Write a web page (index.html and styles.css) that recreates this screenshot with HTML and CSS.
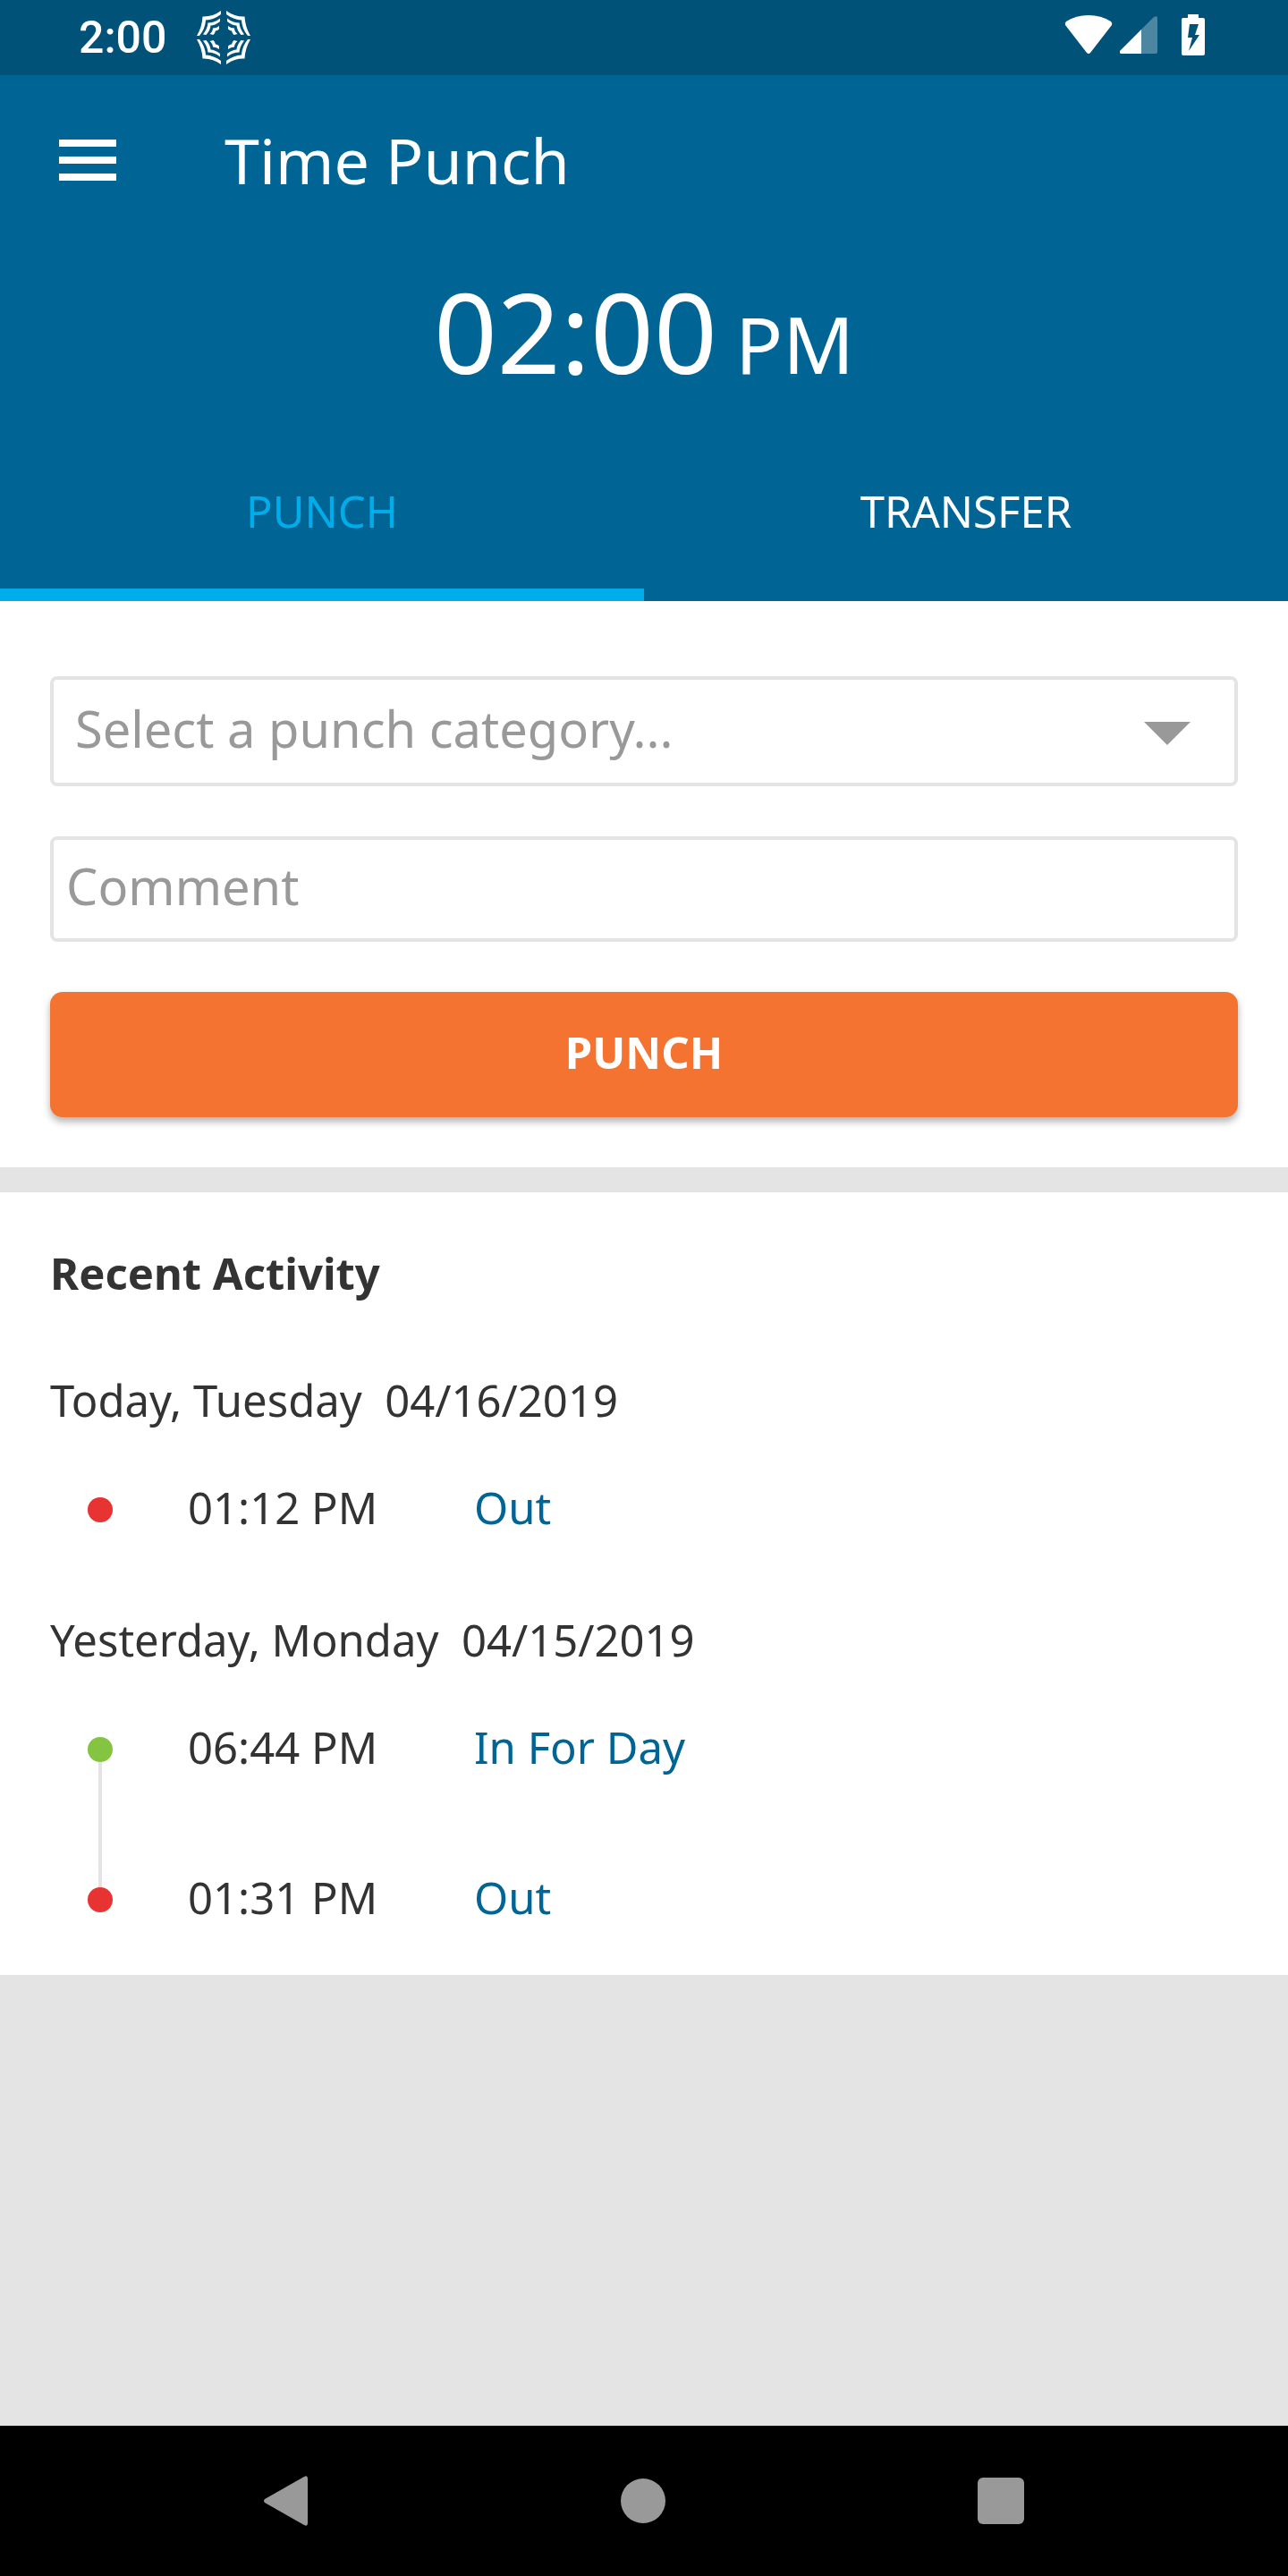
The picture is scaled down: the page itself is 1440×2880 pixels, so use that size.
FILE: index.html
```html
<!DOCTYPE html>
<html lang="en">
<head>
  <meta charset="UTF-8">
  <meta name="viewport" content="width=device-width, initial-scale=1">
  <title>Time Punch</title>
  <link rel="stylesheet" href="styles.css">
</head>
<body>
  <div class="status-bar">
    <span class="status-time">2:00</span>
    <svg class="status-logo" width="60" height="60" viewBox="0 0 60 60" aria-hidden="true">
      <defs>
        <g id="quarter" fill="#fff">
          <path d="M27 0V4Q19 10 10 10.500Q9.500 20 3 28H0Q6 18 6.500 6.500Q18 7 27 0Z"/>
          <path d="M26 8.500V12Q20 16.500 15.500 16.500Q15 22 10.500 27L7 26.500Q12 20 12.500 13.500Q20 13.500 26 8.500Z"/>
          <path d="M25 17V20.500Q23 22.500 21 22.500Q20.500 25 18.500 27L14.500 26Q18 23 18 19.500Q22 19.500 25 17Z"/>
        </g>
      </defs>
      <use href="#quarter"/>
      <use href="#quarter" transform="translate(60 0) scale(-1 1)"/>
      <use href="#quarter" transform="translate(0 60) scale(1 -1)"/>
      <use href="#quarter" transform="translate(60 60) scale(-1 -1)"/>
    </svg>
    <div class="status-icons">
      <svg width="54" height="44" viewBox="0 0 54 44" aria-hidden="true">
        <path fill="#fff" d="M1 11Q0 9 2 7Q13 0 27 0T52 7Q54 9 53 11L29 42Q27 44 25 42Z"/>
      </svg>
      <svg width="42" height="42" viewBox="0 0 42 42" aria-hidden="true">
        <path fill="#fff" opacity=".3" d="M24 15L38 1Q42-1 42 2V40Q42 42 40 42H24Z"/>
        <path fill="#fff" d="M24 15V42H2Q-1 42 0 39Z"/>
      </svg>
      <svg class="battery" width="26" height="46" viewBox="0 0 26 46" aria-hidden="true">
        <path fill="#fff" fill-rule="evenodd" d="M7 0H19V4H24Q26 4 26 6V44Q26 46 24 46H2Q0 46 0 44V6Q0 4 2 4H7ZM9 11L7 26H12L8 41L20 23H15L19 11Z"/>
      </svg>
    </div>
  </div>

  <header class="header">
    <div class="title-bar">
      <button class="menu-button" type="button" aria-label="Menu">
        <svg width="64" height="46" viewBox="0 0 64 46" aria-hidden="true">
          <path fill="#fff" d="M0 0H64V8H0ZM0 19H64V27H0ZM0 38H64V46H0Z"/>
        </svg>
      </button>
      <h1>Time Punch</h1>
    </div>
    <div class="clock">02:00 <small>PM</small></div>
    <div class="tabs" role="tablist">
      <button class="tab active" type="button" role="tab" aria-selected="true">PUNCH</button>
      <button class="tab" type="button" role="tab" aria-selected="false">TRANSFER</button>
    </div>
  </header>

  <main>
    <form class="punch-form">
      <div class="select-wrap">
        <select class="field category" aria-label="Punch category">
          <option>Select a punch category...</option>
        </select>
        <svg class="caret" width="52" height="26" viewBox="0 0 52 26" aria-hidden="true">
          <path fill="#999" d="M0 0H52L26 26Z"/>
        </svg>
      </div>
      <input class="field comment" type="text" placeholder="Comment" aria-label="Comment">
      <button class="punch-button" type="button">PUNCH</button>
    </form>

    <section class="activity">
      <h2>Recent Activity</h2>

      <h3>Today, Tuesday&nbsp; 04/16/2019</h3>
      <ul>
        <li>
          <span class="marker"><span class="dot out"></span></span>
          <span>01:12 PM</span>
          <a href="#">Out</a>
        </li>
      </ul>

      <h3>Yesterday, Monday&nbsp; 04/15/2019</h3>
      <ul>
        <li>
          <span class="marker"><span class="dot in"></span><span class="line"></span></span>
          <span>06:44 PM</span>
          <a href="#">In For Day</a>
        </li>
        <li>
          <span class="marker"><span class="dot out"></span></span>
          <span>01:31 PM</span>
          <a href="#">Out</a>
        </li>
      </ul>
    </section>
  </main>

  <nav class="nav-bar">
    <button type="button" aria-label="Back">
      <svg width="50" height="56" viewBox="0 0 50 56" aria-hidden="true">
        <path fill="#999" d="M1 26L45 1Q49-1 49 3V53Q49 57 45 55L1 30Q-1 28 1 26Z"/>
      </svg>
    </button>
    <button type="button" aria-label="Home">
      <svg width="50" height="50" viewBox="0 0 50 50" aria-hidden="true">
        <circle cx="25" cy="25" r="25" fill="#999"/>
      </svg>
    </button>
    <button type="button" aria-label="Recent apps">
      <svg width="52" height="52" viewBox="0 0 52 52" aria-hidden="true">
        <rect width="52" height="52" rx="6" fill="#999"/>
      </svg>
    </button>
  </nav>
</body>
</html>
```
FILE: styles.css
```css
* {
  box-sizing: border-box;
}
body {
  margin: 0;
  min-height: 100vh;
  display: flex;
  flex-direction: column;
  font-family: "Noto Sans", sans-serif;
  font-size: 49px;
  line-height: 68px;
  color: #333;
  background-color: #e4e4e4;
}
h1, h2, h3, ul {
  margin: 0;
  padding: 0;
}
button, input, select {
  font: inherit;
  margin: 0;
}
button {
  border: none;
  padding: 0;
  background: none;
  cursor: pointer;
}
svg {
  display: block;
}

/* status bar */
.status-bar {
  display: flex;
  align-items: center;
  height: 84px;
  padding: 0 93px 0 88px;
  background-color: #005278;
  color: #fff;
}
.status-time {
  font-family: Roboto, sans-serif;
  font-size: 50px;
  font-weight: 500;
}
.status-logo {
  margin-left: 34px;
}
.status-icons {
  display: flex;
  align-items: center;
  gap: 8px;
  margin-left: auto;
  padding-bottom: 6px;
}
.battery {
  margin-left: 19px;
}

/* header */
.header {
  background-color: #006595;
  color: #fff;
}
.title-bar {
  display: flex;
  align-items: center;
  height: 190px;
  padding: 0 66px;
  gap: 121px;
}
.title-bar h1 {
  font-size: 70px;
  font-weight: 400;
}
.clock {
  padding-bottom: 4px;
  font-size: 124px;
  line-height: 192px;
  text-align: center;
}
.clock small {
  font-size: 88px;
  line-height: 1;
  margin-left: -12px;
}
.tabs {
  display: flex;
}
.tab {
  flex: 1;
  height: 202px;
  color: #fff;
}
.tab.active {
  color: #00adeb;
  box-shadow: inset 0 -14px #00adeb;
}

/* punch form */
.punch-form {
  display: flex;
  flex-direction: column;
  gap: 56px;
  padding: 84px 56px 56px;
  background-color: #fff;
}
.select-wrap {
  position: relative;
}
.field {
  display: block;
  width: 100%;
  border: 4px solid #e4e4e4;
  border-radius: 8px;
  background-color: #fff;
  color: #999;
  font-size: 56px;
  line-height: 80px;
}
.category {
  appearance: none;
  height: 123px;
  padding: 0 112px 8px 24px;
}
.comment {
  height: 118px;
  padding: 0 14px 8px;
}
.comment::placeholder {
  color: #999;
}
.caret {
  position: absolute;
  top: 51px;
  right: 53px;
  pointer-events: none;
}
.punch-button {
  height: 140px;
  padding-bottom: 6px;
  border-radius: 14px;
  background-color: #f47331;
  color: #fff;
  font-weight: 700;
  box-shadow: 0 5px 8px rgba(0,0,0,0.3);
}

/* recent activity */
.activity {
  margin-top: 28px;
  padding: 56px 56px 53px;
  background-color: #fff;
}
.activity h2 {
  margin-bottom: 74px;
  font-size: 49px;
  font-weight: 700;
}
.activity h3 {
  font-size: 49px;
  font-weight: 400;
}
.activity ul {
  display: grid;
  gap: 100px;
  margin-top: 52px;
  list-style: none;
}
.activity ul + h3 {
  margin-top: 80px;
}
.activity li {
  display: grid;
  grid-template-columns: 112px 278px 1fr;
  column-gap: 42px;
  height: 68px;
}
.activity a {
  color: #006595;
  text-decoration: none;
}
.marker {
  display: flex;
  flex-direction: column;
  align-items: center;
  padding-top: 23px;
}
.dot {
  flex-shrink: 0;
  width: 28px;
  height: 28px;
  border-radius: 50%;
}
.dot.in {
  background-color: #84c440;
}
.dot.out {
  background-color: #e73331;
}
.line {
  flex-shrink: 0;
  width: 4px;
  height: 140px;
  background-color: #e4e4e4;
}

/* bottom navigation */
.nav-bar {
  display: flex;
  justify-content: space-between;
  align-items: center;
  height: 168px;
  margin-top: auto;
  padding: 0 295px;
  background-color: #000;
}
```
